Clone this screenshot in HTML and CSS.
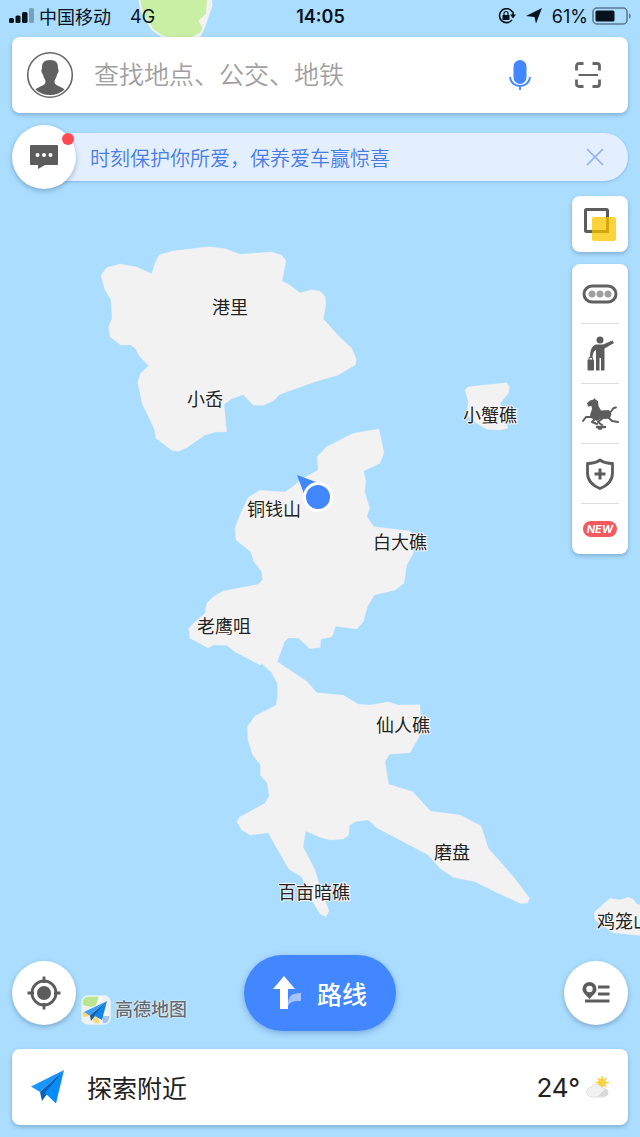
FILE: index.html
```html
<!DOCTYPE html>
<html lang="zh-CN">
<head>
<meta charset="utf-8">
<meta name="viewport" content="width=device-width, initial-scale=1">
<title>高德地图</title>
<link rel="stylesheet" href="styles.css">
</head>
<body>
<div class="app">
  <svg class="map" viewBox="0 0 640 1137" preserveAspectRatio="xMidYMid slice" role="img" aria-label="地图">
    <g transform="scale(.33333)">
      <path class="land" d="M415 -5L422 35L455 90L485 110L520 125L600 112L615 82L637 15L635 -5Z"/>
      <path class="park" d="M420 -5L428 35L460 88L490 108L560 120L600 98L608 85L595 62L618 42L621 -5Z"/>
    </g>
    <g class="land" transform="translate(90 230) scale(.33333)">
      <path d="M33 136L50 113L90 102L140 111L185 131L195 100L208 74L250 63L355 50L405 56L450 73L545 66L575 76L588 92L576 153L598 164L630 189L665 179L690 184L706 200L707 225L700 267L745 317L785 355L799 388L795 405L745 435L675 455L570 493L550 512L520 526L490 526L460 494L425 506L402 523L410 605L375 606L345 615L290 653L265 664L247 662L198 625L193 597L157 522L143 457L152 430L176 407L150 380L135 354L120 344L92 345L60 320L56 290L66 265L63 210L45 180Z"/>
    </g>
    <g class="land" transform="translate(180 420) scale(.33333)">
      <path d="M597 27L612 98L600 130L551 153L557 185L554 215L569 265L560 290L582 320L690 333L702 345L700 400L680 435L672 490L645 510L583 525L562 560L550 605L530 627L467 619L456 650L422 658L421 682L390 686L355 654L325 654L308 670L288 716L240 735L165 695L140 676L100 675L85 684L30 655L26 625L45 605L75 580L80 550L100 530L130 513L235 493L248 480L245 455L222 425L212 395L168 360L165 325L180 285L205 232L240 211L315 216L345 195L360 180L415 150L411 110L440 80L520 40Z"/>
    </g>
    <g class="land" transform="translate(220 640) scale(.33333)">
      <path d="M172 65L262 125L290 158L370 166L415 193L450 195L505 186L535 195L600 194L603 280L570 338L508 343L495 365L506 433L578 455L632 514L720 525L783 558L805 625L880 710L929 775L922 790L900 790L840 762L765 725L700 712L660 685L625 645L540 600L470 563L445 540L408 544L388 556L386 585L370 597L330 600L300 592L257 573L249 620L285 690L300 740L327 812L318 830L300 822L270 770L245 710L207 688L165 615L145 578L90 585L65 570L51 545L60 530L135 490L148 468L142 430L121 405L122 375L98 345L84 300L82 260L105 228L168 196L173 170L172 130L155 98L125 70L45 35L60 -20L195 0Z"/>
    </g>
    <g class="land" transform="translate(440 360) scale(.33333)">
      <path d="M75 90L85 80L200 68L208 80L205 100L180 130L195 150L203 205L180 210L140 208L110 190L80 165L85 125Z"/>
    </g>
    <g class="land" transform="translate(500 880) scale(.33333)">
      <path d="M283 97L330 55L360 60L385 52L400 58L410 72L425 77L425 167L340 158L320 145L285 120Z"/>
    </g>
    <g class="labels">
      <text x="230" y="314">港里</text>
      <text x="205" y="406">小岙</text>
      <text x="490" y="422">小蟹礁</text>
      <text x="274" y="516">铜钱山</text>
      <text x="400" y="549">白大礁</text>
      <text x="224" y="633">老鹰咀</text>
      <text x="403" y="732">仙人礁</text>
      <text x="452" y="859">磨盘</text>
      <text x="314" y="899">百亩暗礁</text>
      <text x="624" y="928">鸡笼山</text>
    </g>
    <path d="M297 475L316 482L304 494Z" fill="#4287ff"/>
    <circle cx="318" cy="497" r="13.500" fill="#4287ff" stroke="#fff" stroke-width="3"/>
  </svg>

  <header class="status">
    <svg width="26" height="16" viewBox="0 0 26 16" aria-hidden="true">
      <rect x="0" y="10" width="5" height="5" rx="1.500"/><rect x="6.500" y="7.500" width="5" height="7.500" rx="1.500"/><rect x="13" y="4" width="5.500" height="11" rx="1.500"/><rect x="20" y="0" width="5" height="15" rx="1.500" opacity=".3"/>
    </svg>
    <span class="carrier">中国移动</span>
    <span class="network">4G</span>
    <time class="clock">14:05</time>
    <span class="status-right">
      <svg width="18" height="16" viewBox="0 0 18 16" fill="none" stroke="#07131c" stroke-width="1.600" aria-hidden="true">
        <path d="M14.500 4A7 7 0 1 0 14 12M15 3.500V8"/><path d="M12 6.500H18L15 10.500Z" fill="#07131c" stroke="none"/>
        <rect x="4.500" y="7" width="7" height="5" fill="#07131c" stroke="none"/><path d="M6 7V5.500a2 2 0 0 1 4 0V7" stroke-width="1.200"/>
      </svg>
      <svg width="16" height="16" viewBox="0 0 16 16" aria-hidden="true"><path d="M16 0L10 15.500L8.500 9L0 8Z"/></svg>
      <span class="percent">61%</span>
      <svg width="40" height="18" viewBox="0 0 40 18" aria-hidden="true">
        <rect x="1" y="1" width="34" height="16" rx="4" fill="none" stroke="#07131c" stroke-opacity=".5" stroke-width="1.500"/>
        <rect x="3.500" y="3.500" width="19" height="11" rx="1.500"/><path d="M37 6q3.500 3 0 6Z" opacity=".5"/>
      </svg>
    </span>
  </header>

  <form class="search card">
    <button class="plain" type="button" aria-label="我的">
      <svg width="48" height="48" viewBox="0 0 48 48" aria-hidden="true">
        <circle cx="24" cy="24" r="22.300" fill="#fff" stroke="#666" stroke-width="1.600"/>
        <path fill="#606060" d="M24 9C18 9 15.500 12 16 18C15 18 15.300 22 17 23.500C17.500 27 19 28 19.500 30C20 35 13 35 9.500 38.500C13 42 18 44 24 44S35 42 38.500 38.500C35 35 28 35 28.500 30C29 28 30.500 27 31 23.500C32.700 22 33 18 32 18C32.500 12 30 9 24 9Z"/>
      </svg>
    </button>
    <input class="query" type="search" aria-label="搜索" placeholder="查找地点、公交、地铁">
    <button class="plain mic" type="button" aria-label="语音搜索">
      <svg width="24" height="32" viewBox="0 0 24 32" aria-hidden="true">
        <rect x="5.500" y="1" width="13" height="24" rx="6.500" fill="#4287ff"/><path d="M2 18C3 30 21 30 22 18M12 27v4" fill="none" stroke="#4287ff" stroke-width="1.800"/>
      </svg>
    </button>
    <button class="plain" type="button" aria-label="扫一扫">
      <svg width="28" height="28" viewBox="0 0 28 28" fill="none" stroke="#666" stroke-width="2.800" aria-hidden="true">
        <path d="M2.500 9.500V5Q2.500 2.500 5 2.500H9.500M18.500 2.500H23Q25.500 2.500 25.500 5V9.500M25.500 18.500V23Q25.500 25.500 23 25.500H18.500M9.500 25.500H5Q2.500 25.500 2.500 23V18.500"/><path d="M4.500 14H24" stroke-width="2"/>
      </svg>
    </button>
  </form>

  <section class="notice">
    <button class="round message" type="button" aria-label="消息">
      <svg width="30" height="26" viewBox="0 0 30 26" aria-hidden="true">
        <path fill="#5c5c5c" d="M2 1H28Q29 1 29 2V20Q29 21 28 21H16L9 25V21H2Q1 21 1 20V2Q1 1 2 1Z"/><g fill="#fff"><circle cx="8.500" cy="11" r="2"/><circle cx="15" cy="11" r="2"/><circle cx="21.500" cy="11" r="2"/></g>
      </svg>
      <span class="dot"></span>
    </button>
    <div class="banner">
      <a class="banner-link" href="#">时刻保护你所爱，保养爱车赢惊喜</a>
      <button class="plain" type="button" aria-label="关闭">
        <svg width="20" height="20" viewBox="0 0 20 20" aria-hidden="true"><path d="M2 2L18 18M18 2L2 18" stroke="#94aff3" stroke-width="1.700"/></svg>
      </button>
    </div>
  </section>

  <nav class="tools" aria-label="地图工具">
    <button class="layers card" type="button" aria-label="图层">
      <svg width="34" height="34" viewBox="0 0 34 34" aria-hidden="true">
        <rect x="2.500" y="2.500" width="22" height="22" rx="1" fill="none" stroke="#5c5c5c" stroke-width="3"/>
        <rect x="9" y="10" width="24" height="24" rx="2" fill="#fbce20" opacity=".88"/><path d="M9 24.500H24.500V10" fill="none" stroke="#cda30e" stroke-width="3" opacity=".85"/>
      </svg>
    </button>
    <div class="tool-list card">
      <button class="tool" type="button" aria-label="路况">
        <svg width="36" height="20" viewBox="0 0 36 20" aria-hidden="true"><rect x="2" y="2" width="32" height="16" rx="8" fill="none" stroke="#606060" stroke-width="3"/><g fill="#a0a0a0"><circle cx="10" cy="10" r="3.500"/><circle cx="18" cy="10" r="3.500"/><circle cx="26" cy="10" r="3.500"/></g></svg>
      </button>
      <button class="tool" type="button" aria-label="打车">
        <svg width="30" height="36" viewBox="0 0 30 36" fill="#5c5c5c" aria-hidden="true">
          <circle cx="15" cy="4" r="3.500"/><path d="M11 8.500H18L27.500 4.500L29 7L19.500 12.500V34.500H16V22H14.500V34.500H11V14C8.500 15 8 17 7.500 21H5C5 14 7 9.500 11 8.500Z"/><rect x="2.500" y="23.500" width="6.500" height="11" rx="1"/><path d="M4 24v-2.500h3.500V24" fill="none" stroke="#5c5c5c"/>
        </svg>
      </button>
      <button class="tool" type="button" aria-label="旅游">
        <svg width="38" height="34" viewBox="0 0 38 34" fill="none" stroke="#5c5c5c" stroke-linecap="round" stroke-linejoin="round" aria-hidden="true">
          <path fill="#5c5c5c" stroke="none" d="M6 6L9 3.500L12.500 2.500L13.500 1L14.500 2.500L17 4L17.500 9L20 13.500L28 13L30.500 17L29 21L25 22L20 21.500L16 24L10 21L9 18L11 12L10.500 9L7 9.500Z"/>
          <path stroke-width="1.800" d="M29 15C32 15 30 10.500 35 10.500"/>
          <path stroke-width="2" d="M11 20L5 20L2 24M14 22L11 25L16 27M27 20L31 24L37 25M22 21L17 25L21 28"/>
          <path stroke-width="2.400" d="M16 30H24M18 31.500H20"/>
        </svg>
      </button>
      <button class="tool" type="button" aria-label="安全">
        <svg width="30" height="32" viewBox="0 0 30 32" fill="none" stroke="#5c5c5c" aria-hidden="true"><path stroke-width="2.800" stroke-linejoin="round" d="M15 2C11.500 4.500 7.500 5.500 2.500 5.500V15C2.500 22.500 7.500 27.500 15 30.500C22.500 27.500 27.500 22.500 27.500 15V5.500C22.500 5.500 18.500 4.500 15 2Z"/><path stroke-width="3" d="M15 10.500V21.500M9.500 16H20.500"/></svg>
      </button>
      <button class="tool last" type="button"><span class="new">NEW</span></button>
    </div>
  </nav>

  <div class="controls">
    <div class="controls-left">
      <button class="round" type="button" aria-label="定位">
        <svg width="34" height="34" viewBox="0 0 34 34" fill="none" stroke="#5c5c5c" aria-hidden="true"><circle cx="17" cy="17" r="12" stroke-width="2.800"/><circle cx="17" cy="17" r="7" fill="#5c5c5c" stroke="none"/><path stroke-width="2.800" d="M17 .5V7M17 27V33.500M.5 17H7M27 17H33.500"/></svg>
      </button>
      <div class="brand">
        <svg width="30" height="30" viewBox="0 0 30 30" aria-hidden="true">
          <defs><clipPath id="tile"><rect x="1" y="1" width="28" height="28" rx="6"/></clipPath></defs>
          <g clip-path="url(#tile)"><rect width="30" height="30" fill="#eef2f0"/><path d="M1 1H19V9L10 12L1 10Z" fill="#b9e68e"/><path d="M20 0L16 12L29 25" stroke="#fff" stroke-width="3" fill="none"/><path d="M0 20L12 18L17 30" stroke="#fbd778" stroke-width="5" fill="none"/><path d="M21 21H30V30H22Z" fill="#a7c4ec"/></g>
          <rect x="1" y="1" width="28" height="28" rx="6" fill="none" stroke="#e9f3fa" stroke-width="1.500"/>
          <path d="M26 6L3 17L9 20.500Z" fill="#38a0f8"/><path d="M26 6L9 20.500L10 26L13 22Z" fill="#155ea5"/><path d="M26 6L13 20.500L21 25Z" fill="#0f86ef"/>
        </svg>
        <span class="brand-name">高德地图</span>
      </div>
    </div>
    <button class="route" type="button">
      <svg width="28" height="34" viewBox="0 0 28 34" aria-hidden="true"><path d="M15 30C15 21 17 17 28 17V25C21 25 18 25 15 30Z" fill="#a5c3ff"/><path d="M11 0L22 13H15V33H7V13H0Z" fill="#fff"/></svg>
      <span>路线</span>
    </button>
    <button class="round list" type="button" aria-label="收藏地点">
      <svg width="28" height="22" viewBox="0 0 28 22" aria-hidden="true"><path fill="#5c5c5c" fill-rule="evenodd" d="M7.500 0A7 7 0 0 1 14.500 7C14.500 11 10.500 13.500 7.500 17C4.500 13.500 .5 11 .5 7A7 7 0 0 1 7.500 0ZM7.500 3.800A3.200 3.200 0 1 0 7.500 10.200A3.200 3.200 0 1 0 7.500 3.800Z"/><path d="M16 5H27.500M16 12H27.500M3 19H27.500" stroke="#5c5c5c" stroke-width="3"/></svg>
    </button>
  </div>

  <footer class="nearby card">
    <svg width="36" height="36" viewBox="0 0 36 36" aria-hidden="true"><path d="M34 1L1 17.500L10 23Z" fill="#1a96fb"/><path d="M34 1L10 23L12 32L17 25Z" fill="#0a62b8"/><path d="M34 1L15 24L26 34.500Z" fill="#078cf8"/></svg>
    <a class="nearby-link" href="#">探索附近</a>
    <span class="temp">24°</span>
    <svg width="24" height="22" viewBox="0 0 24 22" aria-hidden="true"><g stroke="#fbcf52" stroke-width="1.500"><path d="M16 0V13M10 6.500H23M11.500 2L20.500 11M20.500 2L11.500 11"/></g><circle cx="16" cy="6.500" r="4" fill="#fcd13e"/><path d="M6 21A5 5 0 0 1 5.500 11A6 6 0 0 1 15.500 11.500A5 5 0 0 1 18 21Z" fill="#f1f1f2" stroke="#dedee0"/><path d="M10 20.500C16 19 16 13 21 13C24 17 22 20.500 18 20.500Z" fill="#d9d9dc"/></svg>
  </footer>
</div>
</body>
</html>
```

FILE: styles.css
```css
* {
  box-sizing: border-box;
}

body {
  margin: 0;
  background: #abddfe;
  font-family: "Inter", "Noto Sans CJK SC", sans-serif;
  color: #222;
}

button,
input {
  font: inherit;
  color: inherit;
}

button {
  display: flex;
  align-items: center;
  justify-content: center;
  padding: 0;
  border: 0;
  background: none;
}

a {
  color: inherit;
  text-decoration: none;
}

svg {
  display: block;
  flex: none;
}

.app {
  position: relative;
  display: flex;
  flex-direction: column;
  min-height: 100vh;
  padding: 0 12px 12px;
  overflow: hidden;
}

.app > * {
  position: relative;
}

.app > .map {
  position: absolute;
  inset: 0;
  width: 100%;
  height: 100%;
}

.land {
  fill: #f2f2f2;
  stroke: #f2f2f2;
  stroke-width: 1;
  stroke-linejoin: round;
}

.park {
  fill: #c9efa5;
}

.labels {
  font-size: 18px;
  text-anchor: middle;
  fill: #222;
  stroke: #f8f8f8;
  stroke-width: 2;
  stroke-linejoin: round;
  paint-order: stroke;
}

.card {
  background: #fff;
  border-radius: 8px;
  box-shadow: 0 2px 4px rgba(50, 90, 130, 0.35);
}

.status {
  display: grid;
  grid-template-columns: auto auto 1fr auto 1fr;
  align-items: center;
  height: 32px;
  margin: 0 -4px 5px -3px;
  font-size: 18px;
  color: #07131c;
  fill: #07131c;
}

.carrier {
  margin-left: 4px;
}

.network {
  margin-left: 19px;
}

.clock {
  position: absolute;
  left: 50%;
  transform: translateX(-50%);
  font-weight: 600;
}

.status-right {
  display: flex;
  grid-column: 5;
  align-items: center;
  justify-content: flex-end;
  gap: 10px;
}

.percent {
  margin-right: -6px;
}

.search {
  display: flex;
  align-items: center;
  height: 76px;
  padding: 0 26px 0 14px;
}

.query {
  flex: 1;
  min-width: 0;
  margin-left: 20px;
  padding: 0;
  border: 0;
  outline: 0;
  background: none;
  font-size: 25px;
  font-weight: 350;
}

.query::placeholder {
  color: #a0a0a0;
  opacity: 1;
}

.mic {
  margin-right: 42px;
}

.notice {
  display: flex;
  align-items: center;
  margin-top: 12px;
}

.round {
  flex: none;
  width: 64px;
  height: 64px;
  border-radius: 50%;
  background: #fff;
  box-shadow: 0 2px 5px rgba(50, 90, 130, 0.4);
}

.message {
  position: relative;
  z-index: 1;
}

.dot {
  position: absolute;
  top: 8px;
  right: 2px;
  width: 12px;
  height: 12px;
  border-radius: 50%;
  background: #ff4b50;
}

.banner {
  display: flex;
  flex: 1;
  align-items: center;
  justify-content: space-between;
  height: 48px;
  margin-left: -32px;
  padding: 0 23px 0 46px;
  border-radius: 0 24px 24px 0;
  background: #e3effe;
  box-shadow: 0 1px 3px rgba(70, 110, 190, 0.35);
}

.banner-link {
  font-size: 20px;
  font-weight: 350;
  color: #4a7ce6;
}

.tools {
  display: flex;
  flex-direction: column;
  gap: 12px;
  align-self: flex-end;
  width: 56px;
  margin-top: 7px;
}

.layers {
  height: 56px;
}

.tool {
  width: 38px;
  height: 60px;
  margin: 0 auto;
  border-bottom: 1px solid #ddd;
}

.last {
  height: 50px;
  border: 0;
}

.new {
  padding: 0 4px;
  border-radius: 8px;
  background: #f5585e;
  font-size: 11px;
  font-style: italic;
  font-weight: 700;
  line-height: 16px;
  color: #fff;
}

.controls {
  display: grid;
  grid-template-columns: 1fr auto 1fr;
  align-items: center;
  margin-top: auto;
}

.controls-left {
  display: flex;
  align-items: center;
}

.brand {
  display: flex;
  align-items: center;
  gap: 4px;
  margin: 34px 0 0 5px;
}

.brand-name {
  font-size: 18px;
  font-weight: 500;
  line-height: 30px;
  color: #626a73;
  text-shadow: 0 0 1px #fff, 0 0 2px #fff;
}

.route {
  gap: 16px;
  width: 152px;
  height: 76px;
  border-radius: 38px;
  background: #4287ff;
  box-shadow: 0 2px 6px rgba(40, 90, 180, 0.4);
  font-size: 25px;
  font-weight: 500;
  color: #fff;
}

.list {
  justify-self: end;
}

.nearby {
  display: flex;
  align-items: center;
  height: 76px;
  margin-top: 18px;
  padding: 0 18px;
}

.nearby-link {
  flex: 1;
  margin-left: 21px;
  font-size: 25px;
}

.temp {
  margin-right: 6px;
  font-size: 26px;
}
```
